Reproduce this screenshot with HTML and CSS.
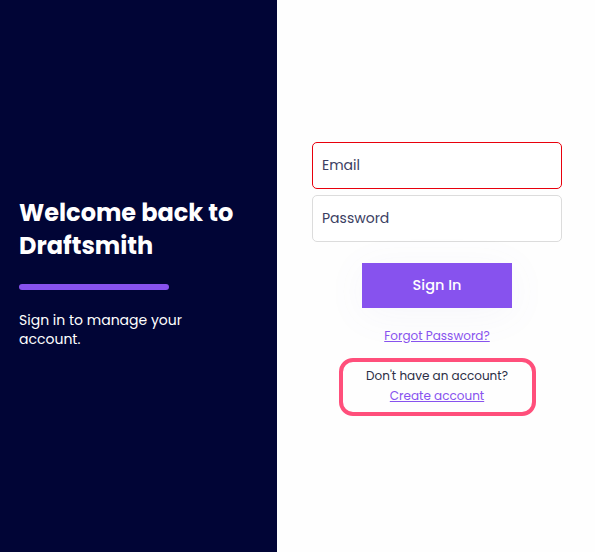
FILE: index.html
```html
<!DOCTYPE html>
<html lang="en">
<head>
<meta charset="utf-8">
<title>Draftsmith – Sign in</title>
<link rel="stylesheet" href="styles.css">
</head>
<body>
<div class="page">
  <aside class="intro">
    <h1 class="intro-title">Welcome back to Draftsmith</h1>
    <div class="intro-bar"></div>
    <p class="intro-text">Sign in to manage your account.</p>
  </aside>
  <main class="auth">
    <form class="auth-form" onsubmit="return false">
      <input class="field field-error" type="email" placeholder="Email">
      <input class="field" type="password" placeholder="Password">
      <button class="submit" type="submit">Sign In</button>
      <a class="link forgot" href="#">Forgot Password?</a>
      <div class="signup">
        <span class="signup-text">Don't have an account?</span>
        <a class="link" href="#">Create account</a>
      </div>
    </form>
  </main>
</div>
</body>
</html>
```
FILE: styles.css
```css
* { box-sizing: border-box; }
html, body { margin: 0; height: 100%; }
body {
  font-family: "Poppins", "Inter", "DejaVu Sans", sans-serif;
  background: #fefefe;
}
.page {
  display: flex;
  height: 552px;
}
.intro {
  width: 277px;
  flex: none;
  background: #010536;
  color: #fff;
  padding: 0 19px 8px;
  display: flex;
  flex-direction: column;
  justify-content: center;
}
.intro-title {
  margin: 0;
  font-size: 24px;
  line-height: 33px;
  font-weight: 700;
}
.intro-bar {
  width: 150px;
  height: 6px;
  border-radius: 3px;
  background: #8752ee;
  margin: 22px 0 21px;
}
.intro-text {
  margin: 0;
  font-size: 14px;
  line-height: 19px;
  width: 180px;
}
.auth {
  flex: 1;
  display: flex;
  align-items: center;
  justify-content: center;
  padding: 6px 0 0 2px;
}
.auth-form {
  width: 250px;
  display: flex;
  flex-direction: column;
  align-items: center;
}
.field {
  width: 250px;
  height: 47px;
  border: 1px solid #dcdcdc;
  border-radius: 5px;
  padding: 0 9px;
  font: inherit;
  font-size: 14px;
  color: #3a3f5e;
  background: #fff;
  margin-bottom: 6px;
}
.field::placeholder { color: #3b4062; }
.field-error { border-color: #e8000c; }
.submit {
  margin-top: 15px;
  width: 150px;
  height: 45px;
  border: none;
  background: #8752ee;
  color: #fff;
  font: inherit;
  font-size: 14.5px;
  font-weight: 500;
  box-shadow: 0 6px 40px rgba(120, 120, 200, 0.06);
}
.link {
  color: #8752ee;
  font-size: 12px;
  text-decoration: underline;
  line-height: 18px;
}
.forgot { margin-top: 19px; }
.signup {
  margin-top: 13px;
  width: 197px;
  border: 4px solid #ff4f7b;
  border-radius: 14px;
  display: flex;
  flex-direction: column;
  align-items: center;
  padding: 5px 0 7px;
}
.signup-text {
  font-size: 12px;
  line-height: 18px;
  color: #2b2d45;
  margin-bottom: 2px;
}
```
